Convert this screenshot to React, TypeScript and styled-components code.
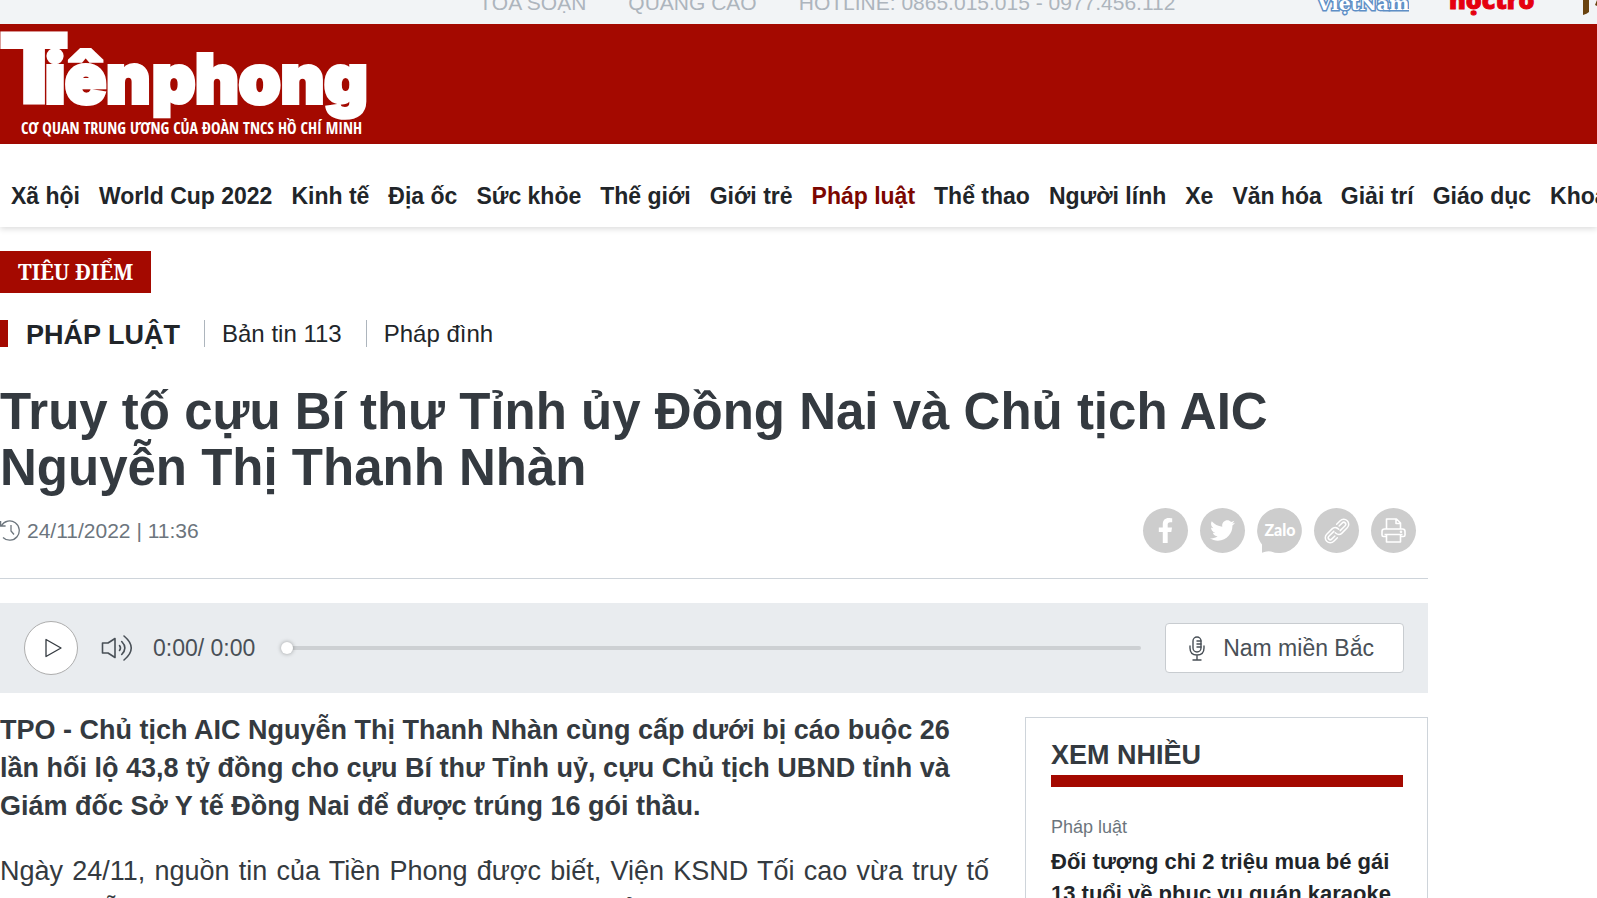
import React from "react";
import styled, { createGlobalStyle } from "styled-components";
import { FaFacebookF, FaTwitter } from "react-icons/fa";

const red = "#a40900";
const ink = "#343a40";

const GlobalStyle = createGlobalStyle`
  * { box-sizing: border-box; }
  body {
    margin: 0;
    background: #fff;
    color: #212529;
    font-family: "Liberation Sans", Arial, sans-serif;
  }
  a { color: inherit; text-decoration: none; }
  button { font-family: inherit; padding: 0; cursor: pointer; }
  h1, h2, h3, p { margin: 0; padding: 0; }
`;

const Page = styled.div`
  height: 100vh;
  overflow: hidden;
`;

const TopBar = styled.div`
  display: flex;
  align-items: flex-end;
  justify-content: space-between;
  height: 24px;
  padding-left: 479px;
  overflow: hidden;
  background: #f2f4f6;
`;

const TopLinks = styled.div`
  display: flex;
  flex-shrink: 0;
  gap: 42px;
  padding-bottom: 8px;
  font-size: 21px;
  line-height: 26px;
  color: #adb5bd;
  white-space: nowrap;
`;

const Partners = styled.div`
  display: flex;
  flex-shrink: 0;
  gap: 40px;
`;

const Masthead = styled.header`
  height: 120px;
  background: ${red};
`;

const Logo = styled.svg`
  display: block;
  overflow: visible;
`;

const MainNav = styled.nav`
  display: flex;
  gap: 19px;
  padding: 37px 11px 16px;
  overflow: hidden;
  font-size: 23px;
  font-weight: 700;
  line-height: 30px;
`;

const NavShadow = styled.div`
  box-shadow: 0 2px 6px rgba(0, 0, 0, 0.14);
`;

const NavLink = styled.a<{ $active?: boolean }>`
  flex-shrink: 0;
  white-space: nowrap;
  color: ${(p) => (p.$active ? "#7c0600" : "#212529")};
`;

const Main = styled.main`
  max-width: 1428px;
  padding-top: 24px;
`;

const Spotlight = styled.a`
  display: inline-block;
  padding: 0 18px;
  background: ${red};
  color: #fff;
  font: 700 21px/42px "Noto Serif", "Liberation Serif", serif;
  vertical-align: top;
`;

const SectionNav = styled.div`
  display: flex;
  align-items: center;
  height: 27px;
  margin-top: 27px;
  border-left: 8px solid ${red};
`;

const SectionTitle = styled.h2`
  padding: 3px 24px 0 18px;
  font-size: 27px;
  line-height: 27px;
`;

const SectionLink = styled.a`
  padding: 0 24px 0 17px;
  border-left: 1px solid #adb5bd;
  font-size: 24px;
  line-height: 27px;
`;

const Headline = styled.h1`
  padding: 37px 140px 0 0;
  color: ${ink};
  font-size: 51px;
  line-height: 56px;
`;

const MetaRow = styled.div`
  display: flex;
  align-items: center;
  justify-content: space-between;
  padding: 12px 12px 25px 0;
  border-bottom: 1px solid #ced4da;
`;

const Published = styled.div`
  display: flex;
  align-items: center;
  gap: 6px;
  color: #6c757d;
  font-size: 21px;
  line-height: 30px;
`;

const ShareList = styled.div`
  display: flex;
  gap: 12px;
`;

const ShareButton = styled.button<{ $bubble?: boolean }>`
  display: flex;
  align-items: center;
  justify-content: center;
  width: 45px;
  height: 45px;
  border: 0;
  border-radius: ${(p) => (p.$bubble ? "0" : "50%")};
  background: ${(p) => (p.$bubble ? "none" : "#cdcdcd")};
  color: #fff;
`;

const Player = styled.section`
  display: flex;
  align-items: center;
  height: 90px;
  margin: 24px 0 18px;
  padding: 0 24px;
  background: #e9ecef;
  color: #495057;
  font-size: 23px;
`;

const PlayButton = styled.button`
  display: flex;
  align-items: center;
  justify-content: center;
  width: 54px;
  height: 54px;
  padding-left: 4px;
  border: 1px solid #adadad;
  border-radius: 50%;
  background: #fff;
  color: ${ink};
`;

const VolumeButton = styled.button`
  display: flex;
  margin: 0 19px 0 23px;
  border: 0;
  background: none;
  color: #495057;
`;

const Time = styled.span`
  line-height: 28px;
  white-space: nowrap;
`;

const Seek = styled.input`
  flex: 1;
  min-width: 0;
  height: 16px;
  margin: 0 24px 0 26px;
  appearance: none;
  background: transparent;

  &::-webkit-slider-runnable-track {
    height: 4px;
    border-radius: 2px;
    background: #cdd0d3;
  }
  &::-webkit-slider-thumb {
    appearance: none;
    width: 12px;
    height: 12px;
    margin-top: -4px;
    border-radius: 50%;
    background: #fff;
    box-shadow: 0 0 4px rgba(0, 0, 0, 0.35);
  }
`;

const VoiceButton = styled.button`
  display: flex;
  align-items: center;
  gap: 18px;
  height: 50px;
  padding: 0 29px 0 23px;
  border: 1px solid #c8ccd0;
  border-radius: 4px;
  background: #fff;
  color: #495057;
  font-size: 23px;
  white-space: nowrap;
`;

const Columns = styled.div`
  display: grid;
  grid-template-columns: minmax(0, 1fr) 403px;
  gap: 36px;
`;

const Article = styled.article`
  color: ${ink};
  font-size: 27px;
`;

const Lead = styled.p`
  font-weight: 700;
  line-height: 38px;
`;

const Body = styled.p`
  padding-top: 26px;
  line-height: 40px;
  text-align: justify;
`;

const MostRead = styled.aside`
  margin-top: 6px;
  padding: 21px 24px 24px 25px;
  border: 1px solid #ced4da;
`;

const BoxTitle = styled.h2`
  padding-bottom: 4px;
  border-bottom: 12px solid ${red};
  color: ${ink};
  font-size: 27px;
  line-height: 32px;
`;

const Category = styled.a`
  display: block;
  padding-top: 26px;
  color: #6c757d;
  font-size: 18px;
  line-height: 28px;
`;

const Story = styled.h3`
  padding-top: 5px;
  font-size: 22px;
  line-height: 32px;
`;

const navItems = [
  "Xã hội", "World Cup 2022", "Kinh tế", "Địa ốc", "Sức khỏe", "Thế giới",
  "Giới trẻ", "Pháp luật", "Thể thao", "Người lính", "Xe", "Văn hóa",
  "Giải trí", "Giáo dục", "Khoa học",
];

const HistoryIcon = () => (
  <svg width="21" height="21" viewBox="0 0 21 21" fill="none" stroke="#6c757d" strokeWidth="1.3">
    <path d="M1.5 5.5A9.6 9.6 0 1 1 3 17.5M.6 1v5h5M11 5v6l3 3.5" />
  </svg>
);

const ZaloIcon = () => (
  <svg width="45" height="45" viewBox="0 0 45 45">
    <path fill="#cdcdcd" d="M22.5 0A22.5 22.5 0 1 1 14 43.4Q9.500 42.500 5 44.800V36.500A22.500 22.500 0 0 1 22.500 0Z" />
    <text x="23" y="28" textAnchor="middle" fill="#fff" fontFamily="Lato, sans-serif" fontWeight="900" fontSize="16">Zalo</text>
  </svg>
);

const LinkIcon = () => (
  <svg width="26" height="26" viewBox="0 0 26 26" fill="none" stroke="#fff" strokeWidth="1.500" strokeLinecap="round" strokeLinejoin="round">
    <g transform="rotate(-45 13 13)">
      <path d="M10.500 13C10.500 16 12.500 18 15 18H22.500A5 5 0 0 0 22.500 8H17.500M15.500 15H22.500A2 2 0 0 0 22.500 11H18" />
      <path d="M15.500 13C15.500 10 13.500 8 11 8H3.500A5 5 0 0 0 3.500 18H8.500M10.500 11H3.500A2 2 0 0 0 3.500 15H8" />
    </g>
  </svg>
);

const PrintIcon = () => (
  <svg width="25" height="25" viewBox="0 0 25 25" fill="none" stroke="#fff" strokeWidth="1.600" strokeLinejoin="round">
    <path d="M5.500 11V1H15.500L19.500 5V11M15 1V5.500H19.500" />
    <path d="M5.500 18.500H2.500Q1 18.500 1 17V13.500Q1 11 3.500 11H21.500Q24 11 24 13.500V17Q24 18.500 22.500 18.500H19.500" />
    <path d="M3.500 16.500H21.500M5.500 16.500V24H19.500V16.500" />
    <circle cx="20" cy="13.800" r=".5" fill="#fff" />
  </svg>
);

const PlayIcon = () => (
  <svg width="18" height="20" viewBox="0 0 18 20" fill="none" stroke="currentColor" strokeWidth="1.300" strokeLinejoin="round">
    <path d="M2 1.500V18.500L17 10Z" />
  </svg>
);

const VolumeIcon = () => (
  <svg width="33" height="28" viewBox="0 0 33 28" fill="none" stroke="currentColor" strokeWidth="1.600" strokeLinejoin="round">
    <path d="M1.500 9V19H7L14 23.500V4.500L7 9Z" />
    <path d="M18.500 11.500Q20.500 14 18.500 16.500M20.700 7.500Q27 14 20.700 20.500M23 2Q37.500 14 23 26" strokeLinecap="round" />
  </svg>
);

const MicIcon = () => (
  <svg width="16" height="25" viewBox="0 0 16 25" fill="none" stroke="currentColor" strokeWidth="1.400" strokeLinecap="round">
    <rect x="4" y="1" width="8" height="15" rx="4" />
    <path d="M1 10V12Q1 19 8 19T15 12V10M8 19V24M4 24H12M8 5H12M8 8H12M8 11H12" />
  </svg>
);

export default function App() {
  return (
    <>
      <GlobalStyle />
      <Page>
        <TopBar>
          <TopLinks>
            <a href="#toa-soan">TÒA SOẠN</a>
            <a href="#quang-cao">QUẢNG CÁO</a>
            <span>HOTLINE: 0865.015.015 - 0977.456.112</span>
          </TopLinks>
          <Partners>
            <svg width="94" height="24" viewBox="0 0 94 24" aria-label="Việt Nam">
              <text x="2" y="10" fill="#fff" stroke="#5f8fc6" strokeWidth="3" paintOrder="stroke" fontFamily="DejaVu Serif, serif" fontWeight="700" fontSize="19">ViệtNam</text>
            </svg>
            <svg width="86" height="24" viewBox="0 0 86 24" aria-label="Học trò">
              <text x="0" y="9" fill="#e5000f" stroke="#e5000f" strokeWidth="1" fontFamily="Open Sans, sans-serif" fontWeight="800" fontSize="25">họctrò</text>
            </svg>
            <svg width="22" height="24" viewBox="0 0 22 24" aria-hidden="true">
              <path fill="#6a430f" d="M8 0H14V12Q12 14 8 15ZM20 5L22 0V6Z" />
            </svg>
          </Partners>
        </TopBar>

        <Masthead>
          <a href="#home" aria-label="Tiền Phong">
            <Logo width="370" height="120" viewBox="0 0 370 120" fill="#fff">
              <g stroke="#fff" strokeWidth="4">
                <text x="2" y="79" fontFamily="DejaVu Sans, sans-serif" fontWeight="700" fontSize="94">T</text>
                <text x="45" y="79" fontFamily="Inter, sans-serif" fontWeight="900" fontSize="68">iên</text>
                <text x="152" y="79" fontFamily="Inter, sans-serif" fontWeight="900" fontSize="67">phong</text>
              </g>
              <text x="21" y="110" fontFamily="Liberation Sans Narrow, Open Sans Condensed, sans-serif" fontSize="16">
                CƠ QUAN TRUNG ƯƠNG CỦA ĐOÀN TNCS HỒ CHÍ MINH
              </text>
            </Logo>
          </a>
        </Masthead>

        <NavShadow>
          <MainNav>
            {navItems.map((name) => (
              <NavLink key={name} href="#nav" $active={name === "Pháp luật"}>{name}</NavLink>
            ))}
          </MainNav>
        </NavShadow>

        <Main>
          <Spotlight href="#tieu-diem">TIÊU ĐIỂM</Spotlight>
          <SectionNav>
            <SectionTitle>PHÁP LUẬT</SectionTitle>
            <SectionLink href="#113">Bản tin 113</SectionLink>
            <SectionLink href="#phap-dinh">Pháp đình</SectionLink>
          </SectionNav>

          <Headline>Truy tố cựu Bí thư Tỉnh ủy Đồng Nai và Chủ tịch AIC Nguyễn Thị Thanh Nhàn</Headline>

          <MetaRow>
            <Published>
              <HistoryIcon />
              <time>24/11/2022 | 11:36</time>
            </Published>
            <ShareList>
              <ShareButton aria-label="Facebook"><FaFacebookF size={25} /></ShareButton>
              <ShareButton aria-label="Twitter"><FaTwitter size={25} /></ShareButton>
              <ShareButton $bubble aria-label="Zalo"><ZaloIcon /></ShareButton>
              <ShareButton aria-label="Sao chép liên kết"><LinkIcon /></ShareButton>
              <ShareButton aria-label="In bài viết"><PrintIcon /></ShareButton>
            </ShareList>
          </MetaRow>

          <Player>
            <PlayButton aria-label="Phát"><PlayIcon /></PlayButton>
            <VolumeButton aria-label="Âm lượng"><VolumeIcon /></VolumeButton>
            <Time>0:00/ 0:00</Time>
            <Seek type="range" min={0} max={100} defaultValue={0} aria-label="Tua" />
            <VoiceButton><MicIcon />Nam miền Bắc</VoiceButton>
          </Player>

          <Columns>
            <Article>
              <Lead>
                TPO - Chủ tịch AIC Nguyễn Thị Thanh Nhàn cùng cấp dưới bị cáo buộc 26 lần hối lộ 43,8 tỷ đồng
                cho cựu Bí thư Tỉnh uỷ, cựu Chủ tịch UBND tỉnh và Giám đốc Sở Y tế Đồng Nai để được trúng 16
                gói thầu.
              </Lead>
              <Body>
                Ngày 24/11, nguồn tin của Tiền Phong được biết, Viện KSND Tối cao vừa truy tố bà Nguyễn Thị
                Thanh Nhàn, cựu Chủ tịch kiêm Tổng giám đốc Công ty AIC về những tội danh liên quan.
              </Body>
            </Article>
            <MostRead>
              <BoxTitle>XEM NHIỀU</BoxTitle>
              <Category href="#phap-luat">Pháp luật</Category>
              <Story><a href="#story">Đối tượng chi 2 triệu mua bé gái 13 tuổi về phục vụ quán karaoke</a></Story>
            </MostRead>
          </Columns>
        </Main>
      </Page>
    </>
  );
}
